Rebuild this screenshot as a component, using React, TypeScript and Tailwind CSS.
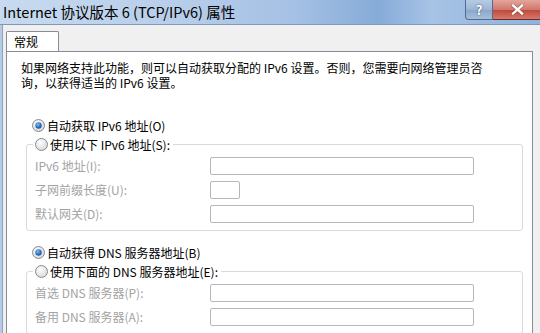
import React from 'react';

const FONT = { fontFamily: '"Noto Sans CJK SC", "Noto Sans", sans-serif' };

function Radio({ checked }: { checked?: boolean }) {
  return (
    <svg width="13" height="13" viewBox="0 0 13 13" className="shrink-0">
      <defs>
        <radialGradient id={checked ? 'rg-on' : 'rg-off'} cx="40%" cy="35%" r="70%">
          <stop offset="0%" stopColor="#ffffff" />
          <stop offset="100%" stopColor="#d4d6d8" />
        </radialGradient>
        <radialGradient id="dot" cx="40%" cy="35%" r="70%">
          <stop offset="0%" stopColor="#7fc1f4" />
          <stop offset="60%" stopColor="#2a71c6" />
          <stop offset="100%" stopColor="#1a4f96" />
        </radialGradient>
      </defs>
      <circle cx="6.5" cy="6.5" r="6" fill={`url(#${checked ? 'rg-on' : 'rg-off'})`} stroke="#8a8c8e" strokeWidth="1" />
      {checked && <circle cx="6.5" cy="6.5" r="3.2" fill="url(#dot)" />}
    </svg>
  );
}

function RadioRow({ checked, label }: { checked?: boolean; label: string }) {
  return (
    <div className="flex items-center h-[19px] gap-[2px] text-black">
      <Radio checked={checked} />
      <span className="leading-[19px]">{label}</span>
    </div>
  );
}

function Field({ label, small }: { label: string; small?: boolean }) {
  return (
    <div className="flex items-center h-[18px]">
      <span className="w-[177px] pl-[2px] text-[#a3a3a3]">{label}</span>
      <div className={`${small ? 'w-[30px]' : 'w-[264px]'} h-[18px] bg-white border border-[#b5b7ba] rounded-[2px]`} />
    </div>
  );
}

function Group({ legend, children }: { legend: React.ReactNode; children: React.ReactNode }) {
  return (
    <fieldset className="border border-[#d5dbe0] rounded-[3px] w-[497px] ml-[19px] pl-[6px] pb-[7px] pt-[3px] flex flex-col gap-[6px]">
      <legend className="pl-[2px] pr-[3px] bg-white">{legend}</legend>
      {children}
    </fieldset>
  );
}

export default function App() {
  return (
    <div className="w-[540px] h-[333px] overflow-hidden bg-[#f0f0f0] flex flex-col text-[12px]" style={FONT}>
      {/* title bar */}
      <div className="h-[25px] shrink-0 flex items-start border-b border-[#7e98b6] bg-[linear-gradient(90deg,#c7daef_0%,#b6cdea_35%,#a4c0e4_55%,#86abd8_70%,#a7c3e5_80%,#8fb2dc_100%)]">
        <div className="flex-1 pl-[3px] pt-[2px] text-[14.5px] leading-[20px] text-black">Internet 协议版本 6 (TCP/IPv6) 属性</div>
        <div className="flex h-[20px] mr-[-2px]">
          <div className="w-[28px] h-[20px] flex items-center justify-center rounded-bl-[4px] border border-t-0 border-[#506d91] bg-[linear-gradient(180deg,#b6cbe4_0%,#9db5d4_50%,#8aa5c8_51%,#a7bfdc_100%)] text-white font-bold text-[13px]" style={{ textShadow: '0 0 2px #2c4870' }}>?</div>
          <div className="w-[49px] h-[20px] flex items-center justify-center rounded-br-[4px] border border-t-0 border-l-0 border-[#6e2828] bg-[linear-gradient(180deg,#e3a59c_0%,#d2776b_50%,#c0463a_51%,#d47a6c_100%)]">
            <svg width="13" height="11" viewBox="0 0 13 11">
              <path d="M2 1.5 L11 9.5 M11 1.5 L2 9.5" stroke="#4a1a1a" strokeWidth="3.6" strokeLinecap="square" opacity="0.45" />
              <path d="M2 1.5 L11 9.5 M11 1.5 L2 9.5" stroke="#ffffff" strokeWidth="2.4" strokeLinecap="square" />
            </svg>
          </div>
        </div>
      </div>

      <div className="flex-1 flex min-h-0">
        {/* left frame */}
        <div className="w-[3px] bg-[#b4cbe6] border-r border-[#8ea4bd]" />
        <div className="flex-1 flex flex-col pl-[3px] pt-[6px] min-w-0">
          {/* tab */}
          <div className="flex h-[20px] shrink-0">
            <div className="w-[53px] h-[20px] bg-white border border-b-0 border-[#898c95] rounded-t-[2px] pl-[7px] pt-[2px] leading-[16px] text-black relative z-10 mb-[-1px]">常规</div>
          </div>
          {/* panel */}
          <div className="w-[527px] flex-1 bg-white border border-[#898c95] border-b-0 pt-[8px]">
            <p className="pl-[14px] leading-[15px] text-black">
              如果网络支持此功能，则可以自动获取分配的 IPv6 设置。否则，您需要向网络管理员咨
              <br />
              询，以获得适当的 IPv6 设置。
            </p>
            <div className="pl-[25px] mt-[26px]">
              <RadioRow checked label="自动获取 IPv6 地址(O)" />
            </div>
            <Group legend={<RadioRow label="使用以下 IPv6 地址(S):" />}>
              <Field label="IPv6 地址(I):" />
              <Field label="子网前缀长度(U):" small />
              <Field label="默认网关(D):" />
            </Group>
            <div className="pl-[25px] mt-[12px]">
              <RadioRow checked label="自动获得 DNS 服务器地址(B)" />
            </div>
            <Group legend={<RadioRow label="使用下面的 DNS 服务器地址(E):" />}>
              <Field label="首选 DNS 服务器(P):" />
              <Field label="备用 DNS 服务器(A):" />
            </Group>
          </div>
        </div>
      </div>
    </div>
  );
}
